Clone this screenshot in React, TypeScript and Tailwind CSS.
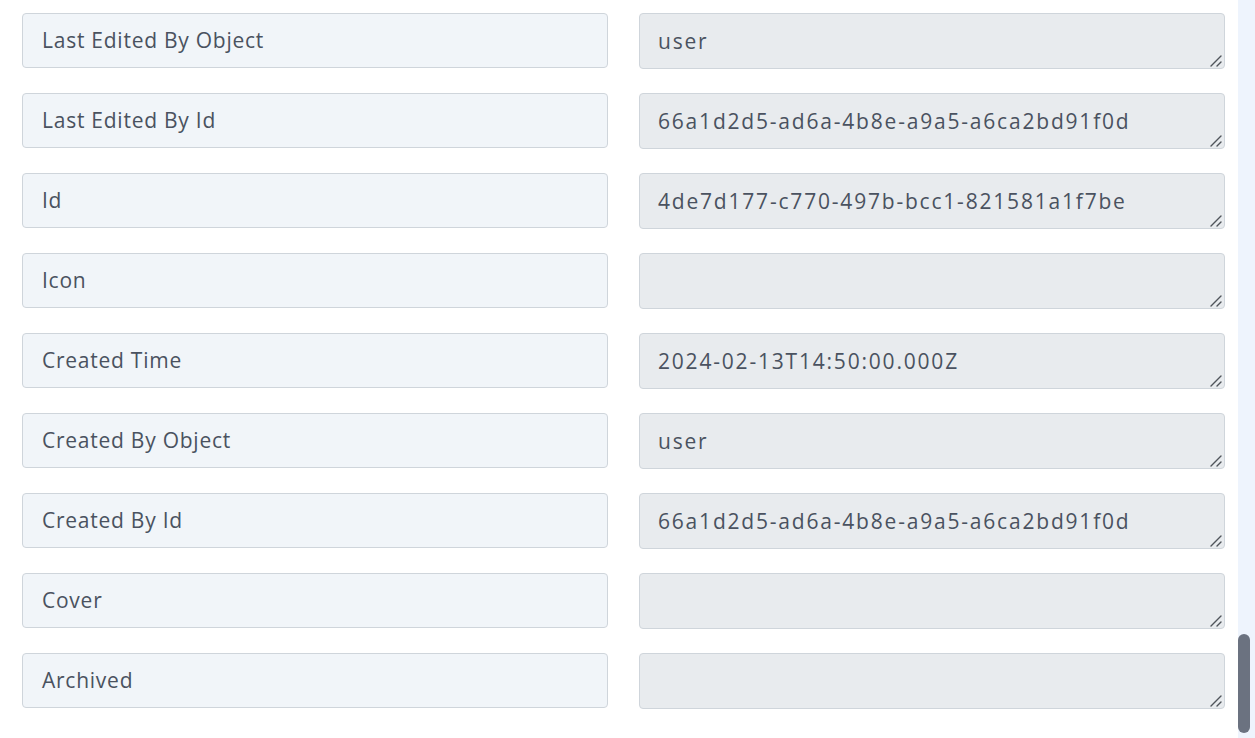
import React from 'react'

type Field = { label: string; value: string }

const FIELDS: Field[] = [
  { label: 'Last Edited By Object', value: 'user' },
  { label: 'Last Edited By Id', value: '66a1d2d5-ad6a-4b8e-a9a5-a6ca2bd91f0d' },
  { label: 'Id', value: '4de7d177-c770-497b-bcc1-821581a1f7be' },
  { label: 'Icon', value: '' },
  { label: 'Created Time', value: '2024-02-13T14:50:00.000Z' },
  { label: 'Created By Object', value: 'user' },
  { label: 'Created By Id', value: '66a1d2d5-ad6a-4b8e-a9a5-a6ca2bd91f0d' },
  { label: 'Cover', value: '' },
  { label: 'Archived', value: '' }
]

const FONT = "font-['Open_Sans',sans-serif]"

function ResizeGrip() {
  return (
    <svg
      className="absolute right-[3px] bottom-[2px] pointer-events-none"
      width="12"
      height="12"
      viewBox="0 0 12 12"
    >
      <path d="M1 11 L11 1 M7 11 L11 7" stroke="#50555b" strokeWidth="1.4" strokeLinecap="round" />
    </svg>
  )
}

function FieldRow({ field }: { field: Field }) {
  return (
    <>
      {/* key name (read-only) */}
      <div
        className={`h-[55px] flex items-center px-[19px] rounded-[4px] border border-[#cfd5db] bg-[#f1f5f9] text-[21px] tracking-[0.75px] text-[#4a5260] ${FONT}`}
      >
        {field.label}
      </div>
      {/* mapped value */}
      <div className="relative h-[56px]">
        <textarea
          readOnly
          value={field.value}
          className={`block h-[56px] w-full resize-none px-[18px] py-[11px] leading-[32px] rounded-[4px] border border-[#cfd5db] bg-[#e8ebee] text-[21px] tracking-[1.8px] text-[#4a5260] outline-none overflow-hidden ${FONT}`}
        />
        <ResizeGrip />
      </div>
    </>
  )
}

export default function App() {
  return (
    <div className="flex h-[738px] w-[1255px] bg-white overflow-hidden">
      <div className="flex-1 pl-[22px] pr-[13px] pt-[13px]">
        <div className="grid grid-cols-2 gap-x-[31px] gap-y-[24px] items-start">
          {FIELDS.map((f) => (
            <FieldRow key={f.label} field={f} />
          ))}
        </div>
      </div>
      {/* scrollbar */}
      <div className="w-[17px] bg-[#eef4fd] flex flex-col justify-end pb-[5px]">
        <div className="w-[12px] h-[99px] rounded-full bg-[#6b7280]" />
      </div>
    </div>
  )
}
